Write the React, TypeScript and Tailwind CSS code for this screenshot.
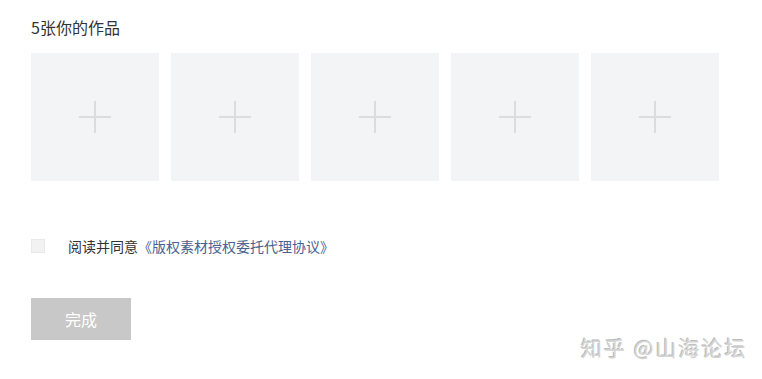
const FONT = "font-['Microsoft_YaHei','Noto_Sans_CJK_SC',sans-serif]"

function UploadTile() {
  return (
    <button
      type="button"
      className="relative flex h-32 w-32 items-center justify-center bg-[#f3f4f6]"
      aria-label="上传作品"
    >
      <span className="absolute h-[2px] w-8 bg-[#dcdcdf]" />
      <span className="absolute h-8 w-[2px] bg-[#dcdcdf]" />
    </button>
  )
}

export default function App() {
  return (
    <div className={`relative h-[379px] w-[762px] overflow-hidden bg-white ${FONT}`}>
      <div className="flex flex-col pl-[31px] pt-[16px]">
        <h3 className="text-[16px] leading-[22px] text-[#333]">5张你的作品</h3>

        <div className="mt-[15px] flex gap-3">
          {[0, 1, 2, 3, 4].map((i) => (
            <UploadTile key={i} />
          ))}
        </div>

        <label className="mt-[55px] flex items-center text-[14px] leading-5">
          <span className="h-[14px] w-[14px] border border-[#e8e8e8] bg-[#f2f2f2]" />
          <span className="ml-[23px] text-[#333]">阅读并同意</span>
          <a className="text-[#4a6290]">《版权素材授权委托代理协议》</a>
        </label>

        <button
          type="button"
          className="mt-[42px] h-[42px] w-[100px] bg-[#c8c8c8] text-[16px] text-white"
        >
          完成
        </button>
      </div>

      <div className="absolute left-[581px] top-[333px] text-[21px] leading-7 tracking-[2px] text-[#d4d4d4] [text-shadow:1px_1px_0_#fff,-1px_-1px_0_#bbb]">
        知乎 @山海论坛
      </div>
    </div>
  )
}
